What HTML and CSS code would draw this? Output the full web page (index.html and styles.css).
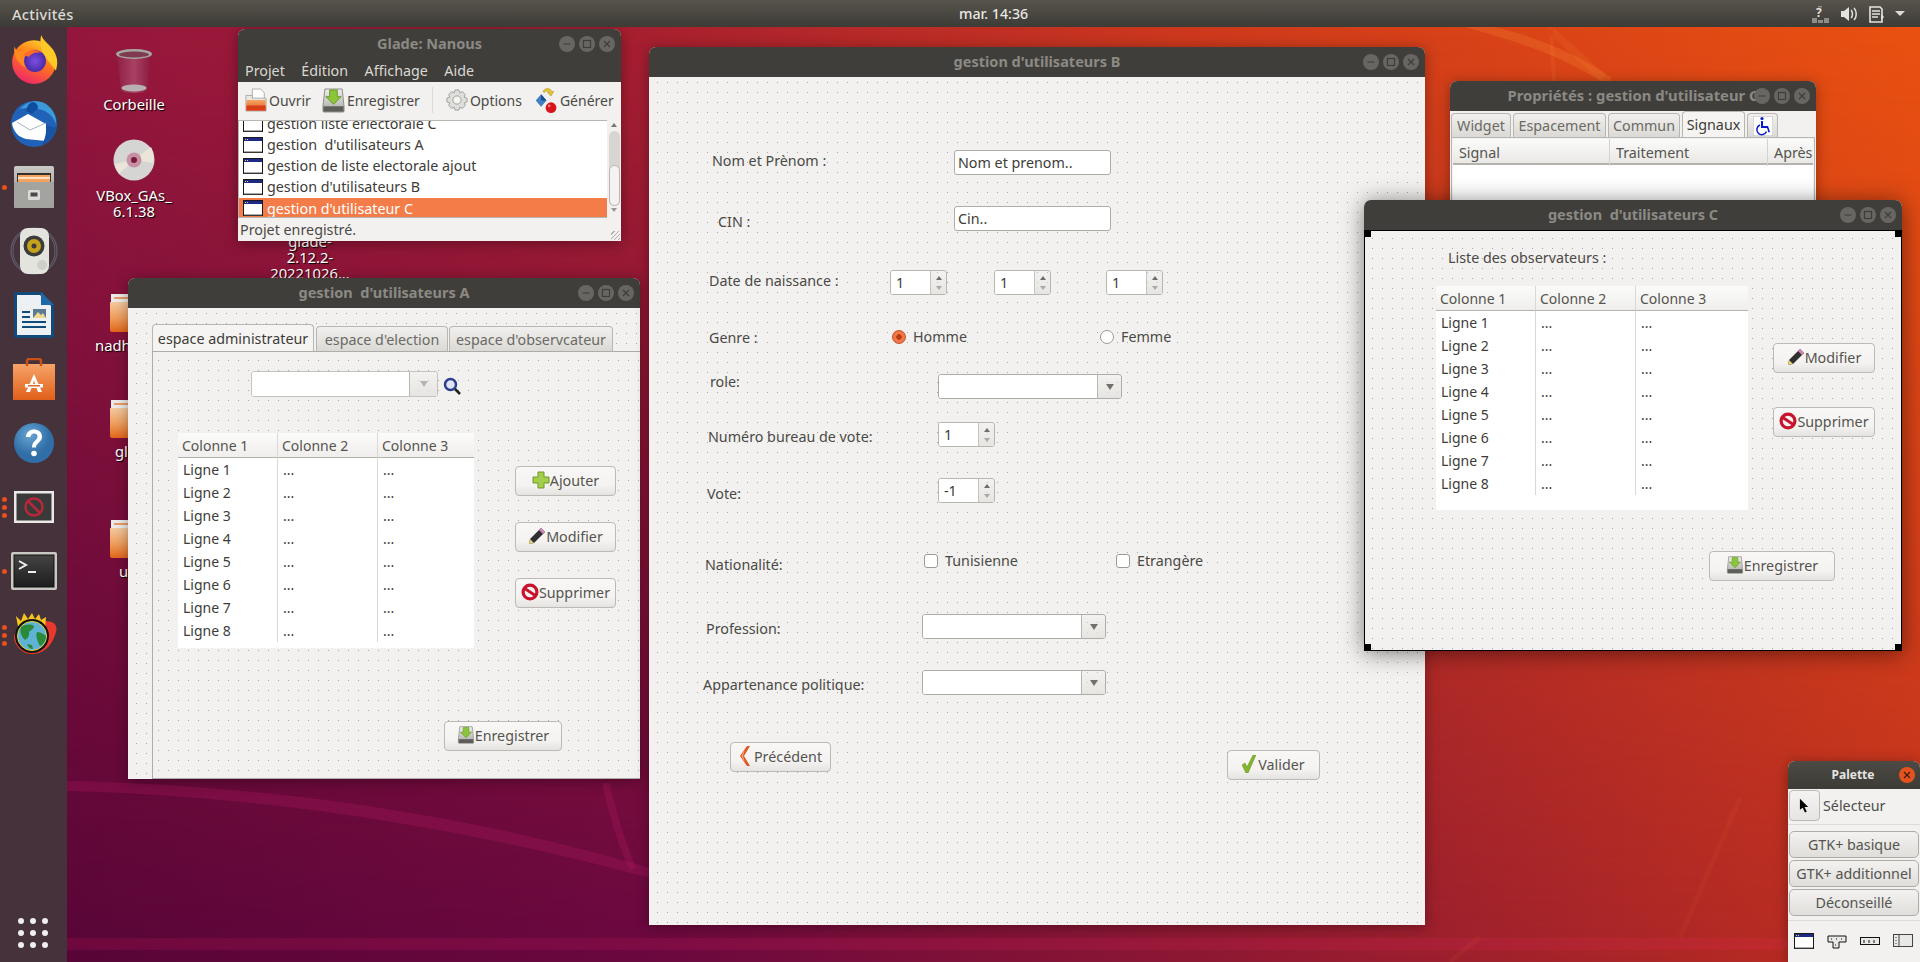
FILE: index.html
```html
<!DOCTYPE html>
<html lang="fr">
<head>
<meta charset="utf-8">
<title>Glade: Nanous</title>
<link rel="stylesheet" href="styles.css">
</head>
<body>
<svg class="defs" aria-hidden="true">
<defs>
<linearGradient id="gFf" x1="0.8" y1="0" x2="0.3" y2="1"><stop offset="0" stop-color="#ffd62e"/><stop offset=".45" stop-color="#ff7a1a"/><stop offset="1" stop-color="#f0246a"/></linearGradient>
<radialGradient id="gFp"><stop offset="0" stop-color="#7c4fe0"/><stop offset="1" stop-color="#4a2aa8"/></radialGradient>
<linearGradient id="gOr" x1="0" y1="0" x2="0" y2="1"><stop offset="0" stop-color="#f6a468"/><stop offset="1" stop-color="#e05f1a"/></linearGradient>
<linearGradient id="gFold" x1="0" y1="0" x2="0" y2="1"><stop offset="0" stop-color="#f4c9a0"/><stop offset=".55" stop-color="#ee9b58"/><stop offset="1" stop-color="#e2661a"/></linearGradient>
<linearGradient id="gGrey" x1="0" y1="0" x2="0" y2="1"><stop offset="0" stop-color="#c9c9c6"/><stop offset="1" stop-color="#8f8f8c"/></linearGradient>
<linearGradient id="gTrash" x1="0" y1="0" x2="1" y2="0"><stop offset="0" stop-color="#8e1f46"/><stop offset=".5" stop-color="#a84163"/><stop offset="1" stop-color="#8a1b40"/></linearGradient>
<radialGradient id="gHelp" cx=".4" cy=".3"><stop offset="0" stop-color="#69a5d4"/><stop offset="1" stop-color="#2f6ea6"/></radialGradient>
<linearGradient id="gTerm" x1="0" y1="0" x2="0" y2="1"><stop offset="0" stop-color="#444"/><stop offset="1" stop-color="#1d1d1d"/></linearGradient>
<linearGradient id="gDrive" x1="0" y1="0" x2="0" y2="1"><stop offset="0" stop-color="#eeeeec"/><stop offset="1" stop-color="#a9a9a6"/></linearGradient>

<symbol id="i-firefox" viewBox="0 0 48 48">
<circle cx="24" cy="27" r="21" fill="url(#gFf)"/>
<path d="M31 1c2 6 8 9 12 15 4 7 4 13 2 19L33 20C31 14 29 8 31 1z" fill="#ffc928"/>
<path d="M5 12c2 5 6 5 10 4 5-3 11-3 15 1-4-1-7 1-8 3-6 2-8 8-4 13-7-2-14-10-13-21z" fill="#ff8a1f"/>
<circle cx="25" cy="26" r="10.5" fill="url(#gFp)"/>
<path d="M14 20c4-5 12-6 17-2-6-1-10 1-12 4z" fill="#ff6a2a"/>
</symbol>
<symbol id="i-tbird" viewBox="0 0 48 48">
<circle cx="24" cy="25" r="23" fill="#1f62b8"/>
<path d="M10 10c6-8 18-10 26-5 6 4 11 12 10 20-3-8-8-12-14-14-5-2-14-3-22-1z" fill="#3c9ad8"/>
<path d="M22 3c4 0 6 3 6 6l-6 6-6-3c1-5 3-8 6-9z" fill="#0f4e9e"/>
<path d="M2 24l16-9 18 10 0 17-20-2C8 38 3 32 2 24z" fill="#fff"/>
<path d="M7 23l13 8 16-7" fill="none" stroke="#a8b4c2" stroke-width="1"/>
<path d="M36 25c5 4 9 4 11 2-2 9-7 16-15 19 3-6 5-13 4-21z" fill="#1853a6"/>
</symbol>
<symbol id="i-files" viewBox="0 0 42 44">
<rect x="1" y="1" width="40" height="42" rx="2" fill="url(#gGrey)"/>
<rect x="4" y="8" width="34" height="12" fill="#33302d"/>
<rect x="5" y="10" width="32" height="8" fill="#f1a35f"/>
<rect x="5" y="12" width="32" height="2" fill="#fbe0c4"/>
<rect x="1" y="17" width="40" height="26" rx="1" fill="#a3a3a0"/>
<rect x="15" y="25" width="12" height="10" rx="1.500" fill="#dcdcda"/>
<rect x="17.500" y="27.500" width="7" height="4" fill="#4a4a48"/>
</symbol>
<symbol id="i-rhythm" viewBox="0 0 48 48">
<circle cx="24" cy="24" r="23" fill="none" stroke="#5c5763" stroke-width="1.500"/>
<path d="M3 24a21 21 0 0 1 8-17M45 24a21 21 0 0 0-8-17M3 24a21 21 0 0 0 8 17M45 24a21 21 0 0 1-8 17" stroke="#62606f" fill="none"/>
<rect x="10" y="1" width="29" height="46" rx="8" fill="#e4e4df"/>
<circle cx="24" cy="19" r="10.500" fill="#3b3b3b"/>
<circle cx="24" cy="19" r="7" fill="#c6a21c"/>
<circle cx="24" cy="19" r="2.500" fill="#3b3b3b"/>
<circle cx="32" cy="38" r="5" fill="#cfcfca"/>
</symbol>
<symbol id="i-writer" viewBox="0 0 40 46">
<path d="M0 0h27l13 13v31a2 2 0 0 1-2 2H2a2 2 0 0 1-2-2z" fill="#114b7c"/>
<path d="M3 3h23l11 11v29H3z" fill="#eef1f4"/>
<path d="M27 0l13 13H27z" fill="#1f6aa6"/>
<path d="M8 19h8v2H8zM8 24h8v2H8zM8 29h24v2H8zM8 34h24v2H8z" fill="#114b7c"/>
<rect x="19" y="17" width="13" height="9" fill="#5a7a96"/>
<path d="M19 26l5-6 3 3 2-2 3 5z" fill="#f0d890"/>
</symbol>
<symbol id="i-store" viewBox="0 0 42 42">
<path d="M0 6h42v36H0z" fill="url(#gOr)"/>
<path d="M14 8V3a2 2 0 0 1 2-2h10a2 2 0 0 1 2 2v5" fill="none" stroke="#c84f16" stroke-width="2.500"/>
<path d="M21 16l-8 18h4l1.500-4h5l1.500 4h4zM20 26l1-4 1 4z" fill="#fff"/>
<rect x="12" y="26" width="18" height="3.500" fill="#fff"/>
<rect x="15" y="27" width="12" height="1.500" fill="#e06a20"/>
</symbol>
<symbol id="i-help" viewBox="0 0 44 44">
<circle cx="22" cy="22" r="20" fill="url(#gHelp)"/>
<path d="M14 16c0-5 4-7.500 8-7.500s8 2.500 8 7c0 6-6 6-6 11h-4c0-7 5.500-7 5.500-11 0-2-1.500-3-3.500-3s-3.500 1.500-3.500 3.500z" fill="#fff"/>
<circle cx="22" cy="32.500" r="2.800" fill="#fff"/>
</symbol>
<symbol id="i-glade" viewBox="0 0 40 32">
<rect x="0" y="0" width="40" height="32" fill="#e9e9e7"/>
<rect x="2.500" y="2.500" width="35" height="27" fill="#3a3a3a"/>
<circle cx="20" cy="16" r="8.500" fill="none" stroke="#b8283a" stroke-width="2.500"/>
<path d="M14 10l12 12" stroke="#b8283a" stroke-width="2.500"/>
</symbol>
<symbol id="i-term" viewBox="0 0 46 38">
<rect x="0" y="0" width="46" height="38" rx="2" fill="#c8c8c5"/>
<rect x="3" y="3" width="40" height="32" fill="url(#gTerm)" stroke="#111"/>
<path d="M8 9l7 4-7 4" fill="none" stroke="#eee" stroke-width="2"/>
<path d="M17 20h8" stroke="#eee" stroke-width="2"/>
</symbol>
<symbol id="i-globe" viewBox="0 0 46 46">
<path d="M4 30C0 22 8 10 34 9c9 0 13 4 11 11-3 10-8 20-22 22-9 1-16-5-19-12z" fill="#e8392e"/>
<path d="M8 20L5 4l5 5 3-8 4 6 4-6 3 6 4-5 2 6 5-3-1 12z" fill="#f7c520"/>
<circle cx="21" cy="24" r="17" fill="#141414"/>
<circle cx="21" cy="24" r="14.500" fill="#5fb4d6" stroke="#e6d53a"/>
<path d="M10 15c4-3 10-3 13-1 0 3-3 4-5 6 1 4-2 7-4 8-3-3-6-8-4-13zM26 20c3 0 7 2 9 4 0 5-3 9-6 10-2-4-5-10-3-14zM16 32l5 1 1 4c-3 0-5-2-6-5z" fill="#2a8a3c"/>
</symbol>
<symbol id="i-trash" viewBox="0 0 40 46">
<path d="M3 6l4 36c0 2 6 3 13 3s13-1 13-3l4-36z" fill="url(#gTrash)"/>
<ellipse cx="20" cy="40" rx="12.500" ry="3.500" fill="#b9b0b2"/>
<ellipse cx="20" cy="6" rx="18" ry="5" fill="#a5a5a2"/>
<ellipse cx="20" cy="6.500" rx="15" ry="3" fill="#7f3a50"/>
</symbol>
<symbol id="i-cd" viewBox="0 0 42 42">
<circle cx="21" cy="21" r="20.500" fill="#d5d5d3"/>
<path d="M21 21L38 8a20 20 0 0 1 2 16zM21 21L6 35a20 20 0 0 1-4-10z" fill="#ebe4d8"/>
<circle cx="21" cy="21" r="7.500" fill="#c790a4"/>
<circle cx="21" cy="21" r="3" fill="#7c1a3e"/>
</symbol>
<symbol id="i-folder" viewBox="0 0 40 38">
<path d="M1 0h36v8H1z" fill="#ecebe8"/>
<path d="M4 3h28v2H4z" fill="#e99a66"/>
<path d="M0 8h40v28a2 2 0 0 1-2 2H2a2 2 0 0 1-2-2z" fill="url(#gFold)"/>
</symbol>

<symbol id="i-win" viewBox="0 0 20 16">
<rect x=".5" y=".5" width="19" height="15" fill="#fff" stroke="#1a1a1a"/>
<rect x="1" y="1" width="18" height="3" fill="#1c2a86"/>
<path d="M2 2h1v1H2zM4 2h1v1H4z" fill="#e8d44c"/>
<path d="M1 15h18" stroke="#555"/>
</symbol>
<symbol id="i-open" viewBox="0 0 24 26">
<path d="M8 1h9l4 4v11H8z" fill="#fff" stroke="#a8a8a4"/>
<path d="M1 8h7v3h15v14H1z" fill="#ece7df" stroke="#a8a8a4"/>
<path d="M1.500 13h21v11.500h-21z" fill="url(#gOr)"/>
<path d="M1.500 19h21v5.500h-21z" fill="#d8401a"/>
</symbol>
<symbol id="i-save" viewBox="0 0 24 26">
<path d="M3 1h18l2 18v5a1 1 0 0 1-1 1H2a1 1 0 0 1-1-1v-5z" fill="url(#gDrive)" stroke="#8a8a86"/>
<rect x="1.500" y="19" width="21" height="5.500" fill="#5d5d5a"/>
<path d="M8 2h8v7h4l-8 8-8-8h4z" fill="#8bc53a" stroke="#5c8f1e" stroke-width=".8"/>
</symbol>
<symbol id="i-gear" viewBox="0 0 24 24">
<path d="M10 1h4l1 3 3-1 3 3-1 3 3 1v4l-3 1 1 3-3 3-3-1-1 3h-4l-1-3-3 1-3-3 1-3-3-1v-4l3-1-1-3 3-3 3 1z" fill="#dededb" stroke="#9a9a96"/>
<circle cx="12" cy="12" r="4.500" fill="#f4f4f2" stroke="#9a9a96"/>
</symbol>
<symbol id="i-gen" viewBox="0 0 24 30">
<path d="M6 8l6 7-6 7-6-7z" fill="#3f7fc4"/>
<path d="M6 8l6 7H6z" fill="#1d4b8c"/>
<path d="M8 5c2-4 8-5 10 0l2 0-3 5-4-4 2 0c-1-2-4-2-5 0z" fill="#e8c22c" stroke="#a48412" stroke-width=".5"/>
<circle cx="17" cy="23" r="6" fill="#d8141c"/>
<circle cx="15" cy="21" r="1.500" fill="#f57a7a"/>
</symbol>
<symbol id="i-plus" viewBox="0 0 18 18">
<path d="M6 1h6v5h5v6h-5v5H6v-5H1V6h5z" fill="#a4cf4d" stroke="#6c9a26"/>
</symbol>
<symbol id="i-pencil" viewBox="0 0 18 18">
<path d="M13 1l4 4L6 16l-5 1 1-5z" fill="#2f2f2f"/>
<path d="M13 1l4 4-2 2-4-4z" fill="#cf86b4"/>
<path d="M2 12l4 4-5 1z" fill="#e3d27a"/>
</symbol>
<symbol id="i-stop" viewBox="0 0 18 18">
<circle cx="9" cy="9" r="8.500" fill="#c8142c"/>
<circle cx="9" cy="9" r="5.300" fill="#f4f4f4"/>
<path d="M3 5l12 8" stroke="#c8142c" stroke-width="3"/>
</symbol>
<symbol id="i-search" viewBox="0 0 18 18">
<circle cx="7.500" cy="7.500" r="5.500" fill="#dfe6f2" stroke="#2b3f92" stroke-width="2.500"/>
<path d="M12 12l5 5" stroke="#222" stroke-width="2.500"/>
</symbol>
<symbol id="i-check" viewBox="0 0 14 18">
<path d="M0 10l3-2 2 4 6-12h3L6 18H4z" fill="#85b52e" stroke="#648a1c" stroke-width=".5"/>
</symbol>
<symbol id="i-back" viewBox="0 0 12 20">
<path d="M8 0h3L5 10l6 10H8L1 10z" fill="#e0561e"/>
<path d="M6 3L2.500 10 6 17 4 10z" fill="#f6b08a"/>
</symbol>
<symbol id="i-wheel" viewBox="0 0 20 20">
<rect width="20" height="20" fill="#fff" stroke="#b9b7b2"/>
<circle cx="9" cy="2.500" r="1.600" fill="#0a18d0"/>
<path d="M8 5h2v5h5l2 6-1.500.5-1.500-4.500H8z" fill="#0a18d0"/>
<path d="M7 9a5 5 0 1 0 6.500 6.500" fill="none" stroke="#0a18d0" stroke-width="1.500"/>
</symbol>
<symbol id="i-cursor" viewBox="0 0 12 16">
<path d="M1 0v12l3-2 2.500 5 2-1L6 9h4z" fill="#000"/>
</symbol>
<symbol id="i-p2" viewBox="0 0 20 16">
<path d="M1 3h18v6h-7v6H6V9H1z" fill="#e8e8e6" stroke="#111"/>
<path d="M4 6h1M9 6h1M14 6h1M8 12h1" stroke="#111"/>
</symbol>
<symbol id="i-p3" viewBox="0 0 20 16">
<rect x=".5" y="4.500" width="19" height="7" fill="#e8e8e6" stroke="#111"/>
<path d="M4 7v3M9 7v3M14 7v3" stroke="#111"/>
</symbol>
<symbol id="i-p4" viewBox="0 0 20 16">
<rect x=".5" y="1.500" width="19" height="12" fill="#e8e8e6" stroke="#444"/>
<path d="M3 4v1M3 7v1M3 10v1M6 2v11" stroke="#444"/>
</symbol>
<symbol id="i-min" viewBox="0 0 16 16"><path d="M4.500 8h7" stroke="currentColor" stroke-width="1.200"/></symbol>
<symbol id="i-max" viewBox="0 0 16 16"><rect x="4.500" y="4.500" width="7" height="7" fill="none" stroke="currentColor" stroke-width="1.200"/></symbol>
<symbol id="i-close" viewBox="0 0 16 16"><path d="M5 5l6 6M11 5l-6 6" stroke="currentColor" stroke-width="1.200"/></symbol>
<symbol id="i-net" viewBox="0 0 18 18">
<path d="M7 1h4v1.500H7zM1 13h5v5H1zM7 15h5v3H7zM13 13h5v5h-5z" fill="#8e8d88"/>
</symbol>
<symbol id="i-vol" viewBox="0 0 18 18">
<path d="M1 6h3l5-4v14l-5-4H1z" fill="#e4e3df"/>
<path d="M11 5c2 2 2 6 0 8M14 3c3 3 3 9 0 12" fill="none" stroke="#e4e3df" stroke-width="1.500"/>
</symbol>
<symbol id="i-clip" viewBox="0 0 16 18">
<path d="M1 2h10l2 2v13H1z" fill="none" stroke="#e4e3df" stroke-width="1.600"/>
<path d="M3 6h8M3 9h8M3 12h6" stroke="#e4e3df" stroke-width="1.400"/>
<path d="M12 9v6l3-3z" fill="#e4e3df"/>
</symbol>
</defs>
</svg>

<svg class="wall" viewBox="0 0 1920 962" preserveAspectRatio="none" aria-hidden="true">
<path d="M0 938H1920V950H0z" fill="#ff2a6a" fill-opacity=".13"/>
<path d="M0 790C260 790 470 830 650 878L650 868C470 815 260 780 0 780z" fill="#c61f6c" fill-opacity=".22"/>
<path d="M602 783C610 820 620 850 630 870L636 868C625 840 615 810 610 783z" fill="#c61f6c" fill-opacity=".22"/>
<path d="M1465 27C1530 45 1570 60 1606 85L1612 78C1580 55 1540 38 1495 27z" fill="#ff9a3c" fill-opacity=".2"/>
<path d="M1549 27L1552 81H1556L1553 27zM1553 27L1606 75L1600 80L1548 33z" fill="#ff9a3c" fill-opacity=".1"/>
<path d="M1680 938l60-140M1450 962l30-25" stroke="#ff8a4c" stroke-opacity=".06" stroke-width="5"/>
</svg>

<header class="topbar">
<span class="activities">Activités</span>
<span class="clock">mar. 14:36</span>
<div class="status">
<span class="st-netwrap"><svg class="st"><use href="#i-net"/></svg><span class="st-q">?</span></span>
<svg class="st st-vol"><use href="#i-vol"/></svg>
<svg class="st st-clip"><use href="#i-clip"/></svg>
<span class="st-caret"></span>
</div>
</header>

<nav class="dock">
<div class="dock-item"><svg class="di di-firefox"><use href="#i-firefox"/></svg></div>
<div class="dock-item"><svg class="di di-tbird"><use href="#i-tbird"/></svg></div>
<div class="dock-item"><span class="run run-1"></span><svg class="di di-files"><use href="#i-files"/></svg></div>
<div class="dock-item"><svg class="di di-rhythm"><use href="#i-rhythm"/></svg></div>
<div class="dock-item"><svg class="di di-writer"><use href="#i-writer"/></svg></div>
<div class="dock-item"><svg class="di di-store"><use href="#i-store"/></svg></div>
<div class="dock-item"><svg class="di di-help"><use href="#i-help"/></svg></div>
<div class="dock-item"><span class="run run-3"></span><svg class="di di-glade"><use href="#i-glade"/></svg></div>
<div class="dock-item"><span class="run run-1"></span><svg class="di di-term"><use href="#i-term"/></svg></div>
<div class="dock-item"><span class="run run-3"></span><svg class="di di-globe"><use href="#i-globe"/></svg></div>
<div class="apps"><i></i><i></i><i></i><i></i><i></i><i></i><i></i><i></i><i></i></div>
</nav>

<div class="dicon dicon-trash"><svg class="dimg-trash"><use href="#i-trash"/></svg><span>Corbeille</span></div>
<div class="dicon dicon-cd"><svg class="dimg-cd"><use href="#i-cd"/></svg><span>VBox_GAs_<br>6.1.38</span></div>
<div class="dicon dicon-glade"><span>glade-<br>2.12.2-<br>20221026...</span></div>
<div class="dfolder dfolder-1"><svg class="dimg-folder"><use href="#i-folder"/></svg><span class="fl-1">nadh</span></div>
<div class="dfolder dfolder-2"><svg class="dimg-folder"><use href="#i-folder"/></svg><span class="fl-2">gl</span></div>
<div class="dfolder dfolder-3"><svg class="dimg-folder"><use href="#i-folder"/></svg><span class="fl-3">u</span></div>

<!-- Glade main window -->
<section class="win win-glade">
<div class="tbar tbar-glade"><span class="wt">Glade: Nanous</span>
<div class="wbtns"><svg class="wb"><use href="#i-min"/></svg><svg class="wb"><use href="#i-max"/></svg><svg class="wb"><use href="#i-close"/></svg></div></div>
<div class="menubar"><span>Projet</span><span>Édition</span><span>Affichage</span><span>Aide</span></div>
<div class="toolbar">
<span class="tool t-open"><svg class="ti"><use href="#i-open"/></svg>Ouvrir</span>
<span class="tool t-save"><svg class="ti ti-save"><use href="#i-save"/></svg>Enregistrer</span>
<span class="tsep"></span>
<span class="tool t-opt"><svg class="ti"><use href="#i-gear"/></svg>Options</span>
<span class="tool t-gen"><svg class="ti ti-gen"><use href="#i-gen"/></svg>Générer</span>
</div>
<div class="listwrap">
<ul class="flist">
<li><svg class="li-i"><use href="#i-win"/></svg>gestion liste erlectorale C</li>
<li><svg class="li-i"><use href="#i-win"/></svg>gestion&nbsp; d'utilisateurs A</li>
<li><svg class="li-i"><use href="#i-win"/></svg>gestion de liste electorale ajout</li>
<li><svg class="li-i"><use href="#i-win"/></svg>gestion d'utilisateurs B</li>
<li class="sel"><svg class="li-i"><use href="#i-win"/></svg>gestion d'utilisateur C</li>
</ul>
<div class="vscroll"><span class="up"></span><span class="trough"><span class="thumb"></span></span><span class="down"></span></div>
</div>
<div class="statusbar">Projet enregistré.<span class="grip"></span></div>
</section>

<!-- Window A -->
<section class="win win-a">
<div class="tbar"><span class="wt">gestion&nbsp; d'utilisateurs A</span>
<div class="wbtns"><svg class="wb"><use href="#i-min"/></svg><svg class="wb"><use href="#i-max"/></svg><svg class="wb"><use href="#i-close"/></svg></div></div>
<div class="dotted a-body">
<div class="tabs a-tabs">
<span class="tab on a-t1">espace administrateur</span>
<span class="tab a-t2">espace d'election</span>
<span class="tab a-t3">espace d'observcateur</span>
</div>
<div class="a-panel dotted">
<div class="a-search">
<div class="combo combo-off a-combo"><span class="cb-entry"></span><span class="cb-btn"><i></i></span></div>
<svg class="search-i"><use href="#i-search"/></svg>
</div>
<div class="a-mid">
<div class="tree tree-a">
<div class="th">Colonne 1</div><div class="th">Colonne 2</div><div class="th">Colonne 3</div>
<div class="td">Ligne 1</div><div class="td">...</div><div class="td">...</div>
<div class="td">Ligne 2</div><div class="td">...</div><div class="td">...</div>
<div class="td">Ligne 3</div><div class="td">...</div><div class="td">...</div>
<div class="td">Ligne 4</div><div class="td">...</div><div class="td">...</div>
<div class="td">Ligne 5</div><div class="td">...</div><div class="td">...</div>
<div class="td">Ligne 6</div><div class="td">...</div><div class="td">...</div>
<div class="td">Ligne 7</div><div class="td">...</div><div class="td">...</div>
<div class="td">Ligne 8</div><div class="td">...</div><div class="td">...</div>
</div>
<div class="a-btns">
<span class="btn"><svg class="bi"><use href="#i-plus"/></svg>Ajouter</span>
<span class="btn"><svg class="bi"><use href="#i-pencil"/></svg>Modifier</span>
<span class="btn"><svg class="bi"><use href="#i-stop"/></svg>Supprimer</span>
</div>
</div>
<span class="btn a-save"><svg class="bi"><use href="#i-save"/></svg>Enregistrer</span>
</div>
</div>
</section>

<!-- Window B -->
<section class="win win-b">
<div class="tbar"><span class="wt">gestion d'utilisateurs B</span>
<div class="wbtns"><svg class="wb"><use href="#i-min"/></svg><svg class="wb"><use href="#i-max"/></svg><svg class="wb"><use href="#i-close"/></svg></div></div>
<div class="dotted b-body">
<div class="row r-nom"><label class="lab">Nom et Prènom :</label><span class="entry">Nom et prenom..</span></div>
<div class="row r-cin"><label class="lab">CIN :</label><span class="entry">Cin..</span></div>
<div class="row r-date"><label class="lab">Date de naissance :</label>
<span class="spin sp1"><b>1</b><span class="arrows"><i></i><i></i></span></span>
<span class="spin sp2"><b>1</b><span class="arrows"><i></i><i></i></span></span>
<span class="spin sp3"><b>1</b><span class="arrows"><i></i><i></i></span></span></div>
<div class="row r-genre"><label class="lab">Genre :</label>
<span class="opt opt-r"><i class="radio on"></i>Homme</span><span class="opt"><i class="radio"></i>Femme</span></div>
<div class="row r-role"><label class="lab">role:</label><div class="combo c-role"><span class="cb-entry"></span><span class="cb-btn"><i></i></span></div></div>
<div class="row r-num"><label class="lab">Numéro bureau de vote:</label><span class="spin"><b>1</b><span class="arrows"><i></i><i></i></span></span></div>
<div class="row r-vote"><label class="lab">Vote:</label><span class="spin"><b>-1</b><span class="arrows"><i></i><i></i></span></span></div>
<div class="row r-nat"><label class="lab">Nationalité:</label>
<span class="opt opt-c"><i class="check"></i>Tunisienne</span><span class="opt"><i class="check"></i>Etrangère</span></div>
<div class="row r-prof"><label class="lab">Profession:</label><div class="combo c-prof"><span class="cb-entry"></span><span class="cb-btn"><i></i></span></div></div>
<div class="row r-app"><label class="lab">Appartenance politique:</label><div class="combo c-prof"><span class="cb-entry"></span><span class="cb-btn"><i></i></span></div></div>
<div class="b-actions"><span class="btn b-prev"><svg class="bi bi-back"><use href="#i-back"/></svg>Précédent</span><span class="btn b-ok"><svg class="bi bi-check"><use href="#i-check"/></svg>Valider</span></div>
</div>
</section>

<!-- Properties window -->
<section class="win win-p">
<div class="tbar"><span class="wt wt-p">Propriétés : gestion d'utilisateur C</span>
<div class="wbtns"><svg class="wb"><use href="#i-min"/></svg><svg class="wb"><use href="#i-max"/></svg><svg class="wb"><use href="#i-close"/></svg></div></div>
<div class="tabs p-tabs">
<span class="tab p-t1">Widget</span><span class="tab p-t2">Espacement</span><span class="tab p-t3">Commun</span><span class="tab on p-t4">Signaux</span><span class="tab p-t5"><svg class="wheel"><use href="#i-wheel"/></svg></span>
</div>
<div class="p-panel">
<div class="p-head"><span class="ph1">Signal</span><span class="ph2">Traitement</span><span class="ph3">Après</span></div>
<div class="p-white"></div>
</div>
</section>

<!-- Window C -->
<section class="win win-c">
<div class="tbar"><span class="wt">gestion&nbsp; d'utilisateurs C</span>
<div class="wbtns"><svg class="wb"><use href="#i-min"/></svg><svg class="wb"><use href="#i-max"/></svg><svg class="wb"><use href="#i-close"/></svg></div></div>
<div class="dotted c-body">
<span class="hd hd-1"></span><span class="hd hd-2"></span><span class="hd hd-3"></span><span class="hd hd-4"></span>
<label class="c-title">Liste des observateurs :</label>
<div class="c-mid">
<div class="tree tree-c">
<div class="th">Colonne 1</div><div class="th">Colonne 2</div><div class="th">Colonne 3</div>
<div class="td">Ligne 1</div><div class="td">...</div><div class="td">...</div>
<div class="td">Ligne 2</div><div class="td">...</div><div class="td">...</div>
<div class="td">Ligne 3</div><div class="td">...</div><div class="td">...</div>
<div class="td">Ligne 4</div><div class="td">...</div><div class="td">...</div>
<div class="td">Ligne 5</div><div class="td">...</div><div class="td">...</div>
<div class="td">Ligne 6</div><div class="td">...</div><div class="td">...</div>
<div class="td">Ligne 7</div><div class="td">...</div><div class="td">...</div>
<div class="td">Ligne 8</div><div class="td">...</div><div class="td">...</div>
</div>
<div class="c-btns">
<span class="btn"><svg class="bi"><use href="#i-pencil"/></svg>Modifier</span>
<span class="btn"><svg class="bi"><use href="#i-stop"/></svg>Supprimer</span>
</div>
</div>
<span class="btn c-save"><svg class="bi"><use href="#i-save"/></svg>Enregistrer</span>
</div>
</section>

<!-- Palette -->
<section class="win win-pal">
<div class="tbar tbar-pal"><span class="wt-pal">Palette</span><svg class="pal-x"><use href="#i-close"/></svg></div>
<div class="pal-sel"><span class="pal-cur"><svg class="cur-i"><use href="#i-cursor"/></svg></span><span>Sélecteur</span></div>
<div class="pal-groups">
<span class="pal-g">GTK+ basique</span>
<span class="pal-g">GTK+ additionnel</span>
<span class="pal-g">Déconseillé</span>
</div>
<div class="pal-icons"><svg class="pi"><use href="#i-win"/></svg><svg class="pi"><use href="#i-p2"/></svg><svg class="pi"><use href="#i-p3"/></svg><svg class="pi"><use href="#i-p4"/></svg></div>
</section>
</body>
</html>
```

FILE: styles.css
```css
* { box-sizing: border-box; }
html, body { margin: 0; padding: 0; }
body {
  position: relative;
  width: 1920px;
  height: 962px;
  overflow: hidden;
  font-family: "Noto Sans", "Open Sans", sans-serif;
  font-size: 14.3px;
  color: #3d3c38;
  background: linear-gradient(to right, #560537 0, #6a0840 33%, #9c1f2e 75%, #c0301f 100%);
}
body::before {
  content: "";
  position: absolute;
  inset: 0;
  background: linear-gradient(to right, #95163f 0, #a8202f 33%, #cf3a1c 62%, #ea5210 100%);
  -webkit-mask-image: linear-gradient(to bottom, #000 0, rgba(0,0,0,.55) 45%, transparent 100%);
  mask-image: linear-gradient(to bottom, #000 0, rgba(0,0,0,.55) 45%, transparent 100%);
}
.defs { position: absolute; width: 0; height: 0; }
svg { display: block; flex: none; }
.wall { position: absolute; left: 0; top: 0; width: 1920px; height: 962px; }

/* top bar */
.topbar {
  position: absolute; left: 0; top: 0; width: 1920px; height: 27px; z-index: 50;
  background: linear-gradient(#58544c, #3c3b36);
  color: #e6e5e1; display: flex; align-items: center; padding-left: 12px;
}
.activities { font-size: 14.6px; font-weight: 500; letter-spacing: .3px; color: #dcdbd6; }
.clock { position: absolute; left: 959px; font-weight: 500; font-size: 14.2px; color: #e8e7e3; }
.status { margin-left: auto; display: flex; align-items: center; }
.st { width: 18px; height: 18px; }
.st-netwrap { position: relative; width: 18px; height: 18px; margin-right: 11px; }
.st-q { position: absolute; left: 5px; top: -2px; font-size: 12px; font-weight: 700; line-height: 20px; color: #e4e3df; }
.st-vol { margin-right: 11px; }
.st-clip { width: 16px; margin-right: 10px; }
.st-caret { width: 0; height: 0; border: 5px solid transparent; border-top: 5px solid #dcdbd6; border-bottom: 0; margin-right: 15px; }

/* dock */
.dock {
  position: absolute; left: 0; top: 27px; width: 67px; height: 935px; z-index: 40;
  background: #45323b; display: flex; flex-direction: column;
}
.dock-item { position: relative; height: 64px; display: flex; align-items: center; justify-content: center; }
.di-firefox { width: 50px; height: 50px; }
.di-tbird { width: 48px; height: 48px; }
.di-files { width: 42px; height: 44px; }
.di-rhythm { width: 48px; height: 48px; }
.di-writer { width: 40px; height: 46px; }
.di-store { width: 42px; height: 42px; }
.di-help { width: 44px; height: 44px; }
.di-glade { width: 40px; height: 32px; }
.di-term { width: 46px; height: 38px; }
.di-globe { width: 46px; height: 46px; }
.run { position: absolute; left: 2px; top: 50%; width: 5px; height: 5px; margin-top: -2px; border-radius: 50%; background: #e8501e; }
.run-3 { box-shadow: 0 -8px 0 #e8501e, 0 8px 0 #e8501e; }
.apps { margin-top: auto; margin-bottom: 14px; padding-left: 18px; display: grid; grid-template-columns: repeat(3, 6px); gap: 6px; }
.apps i { width: 6px; height: 6px; border-radius: 50%; background: #f0eeee; }

/* desktop icons */
.dicon, .dfolder { position: absolute; color: #fff; text-shadow: 1px 1px 1px #000; font-size: 14.8px; line-height: 16px; text-align: center; }
.dicon { display: flex; flex-direction: column; align-items: center; }
.dicon-trash { left: 84px; top: 48px; width: 100px; }
.dimg-trash { width: 40px; height: 46px; margin-bottom: 2px; }
.dicon-cd { left: 84px; top: 139px; width: 100px; }
.dimg-cd { width: 42px; height: 42px; margin-bottom: 6px; }
.dicon-glade { left: 250px; top: 233px; width: 120px; }
.dfolder { left: 110px; width: 40px; }
.dimg-folder { width: 40px; height: 38px; }
.dfolder-1 { top: 294px; }
.dfolder-2 { top: 400px; }
.dfolder-3 { top: 520px; }
.dfolder span { display: block; text-align: left; margin-top: 5px; }
.fl-1 { margin-left: -15px; }
.fl-2 { margin-left: 5px; }
.fl-3 { margin-left: 9px; }

/* windows */
.win { position: absolute; border-radius: 7px 7px 0 0; box-shadow: 0 2px 14px rgba(0,0,0,.35); background: #f2f1ef; }
.win-glade { left: 238px; top: 29px; width: 383px; height: 212px; z-index: 5; }
.win-a { left: 128px; top: 278px; width: 512px; height: 501px; z-index: 6; }
.win-b { left: 649px; top: 47px; width: 776px; height: 878px; z-index: 7; }
.win-p { left: 1450px; top: 81px; width: 366px; height: 140px; z-index: 8; }
.win-c { left: 1364px; top: 200px; width: 538px; height: 451px; z-index: 9; }
.win-pal { left: 1788px; top: 761px; width: 132px; height: 201px; z-index: 10; }

.tbar {
  position: relative; height: 30px; padding-bottom: 2px; background: #403e3a; border-radius: 7px 7px 0 0;
  display: flex; align-items: center; justify-content: center;
}
.tbar-glade { height: 31px; padding-bottom: 4px; }
.wt { font-size: 14.5px; font-weight: 700; color: #8b8a85; white-space: pre; }
.wt-p { font-size: 14.8px; }
.wbtns { position: absolute; right: 6px; top: 7px; display: flex; gap: 4px; }
.wb { width: 16px; height: 16px; border-radius: 50%; background: #686662; color: #3f3d39; }

.dotted {
  background-color: #f2f1ef;
  background-image: conic-gradient(from 270deg at 1px 1px, #a8a7a3 25%, transparent 0);
  background-size: 10px 10px;
  background-position: 8px 5px;
}

/* glade */
.menubar { height: 22px; padding-bottom: 2px; background: #403e3a; color: #d9d8d3; display: flex; align-items: center; padding-left: 7px; gap: 16.5px; }
.toolbar { height: 38px; padding-bottom: 2px; background: #f2f1ef; display: flex; align-items: center; padding-left: 7px; color: #4b4a46; font-size: 14px; }
.tool { display: flex; align-items: center; gap: 2px; }
.ti { width: 22px; height: 24px; }
.ti-save { width: 23px; height: 25px; }
.ti-gen { width: 23px; height: 27px; }
.t-save { margin-left: 11px; }
.tsep { width: 1px; height: 26px; background: #dbdad6; margin: 0 13px 0 12px; }
.t-gen { margin-left: 13px; }
.listwrap { height: 98px; display: flex; background: #f2f1ef; overflow: hidden; }
.flist { list-style: none; margin: 0; padding: 0; width: 369px; height: 98px; overflow: hidden; background: #fff; border: 1px solid #b8b6b0; border-width: 1px 0 1px 1px; }
.flist li { height: 21px; display: flex; align-items: center; padding-left: 4px; gap: 4px; color: #3d3c38; margin-top: 0; white-space: pre; }
.flist li:first-child { margin-top: -8px; }
.flist .sel { background: #f37c48; color: #fff; margin-top: 1px; padding-bottom: 1px; }
.li-i { width: 20px; height: 16px; }
.vscroll { width: 14px; display: flex; flex-direction: column; align-items: center; padding-top: 3px; }
.up, .down { width: 0; height: 0; border: 3px solid transparent; }
.up { border-bottom: 4px solid #77766f; border-top: 0; }
.down { border-top: 4px solid #9a9993; border-bottom: 0; margin-top: 2px; }
.trough { width: 11px; height: 75px; margin-top: 4px; background: #d6d5d1; border-radius: 6px; display: flex; flex-direction: column; justify-content: flex-end; }
.thumb { display: block; height: 41px; border-radius: 6px; background: #f4f3f1; border: 1px solid #b8b6b0; }
.statusbar { position: relative; height: 23px; padding: 0 0 0 2px; line-height: 23px; color: #4b4a46; background: #f2f1ef; }
.grip { position: absolute; right: 1px; bottom: 1px; width: 9px; height: 9px; background: repeating-linear-gradient(135deg, transparent 0 2px, #b0aea8 2px 3px); }

/* tabs */
.tabs { display: flex; align-items: flex-end; }
.tab {
  display: flex; align-items: center; justify-content: center; height: 25px;
  border: 1px solid #b8b6b0; border-bottom: 0; border-radius: 4px 4px 0 0;
  background: linear-gradient(#f1f0ee, #dad9d5); color: #6b6a65; white-space: nowrap;
}
.tab.on { background: #f5f4f3; color: #3d3c38; }
.a-body { height: 471px; padding: 16px 0 0 24px; }
.a-tabs { height: 27px; }
.a-t1 { width: 162px; height: 27px; }
.a-t2 { width: 132px; margin-left: 2px; }
.a-t3 { width: 164px; margin-left: 1px; }
.a-panel { height: 428px; width: 488px; border: 1px solid #aeaca6; border-width: 1px 0 1px 1px; padding: 19px 0 0 98px; background-position: 5px 8px; }
.a-search { display: flex; align-items: center; height: 26px; }
.search-i { width: 18px; height: 18px; margin-left: 5px; margin-top: 4px; }
.a-mid { display: flex; margin: 36px 0 0 -73px; }
.a-btns { margin-left: 41px; padding-top: 33px; display: flex; flex-direction: column; gap: 26px; width: 101px; }
.a-save { width: 118px; margin: 73px 0 0 193px; }

/* common widgets */
.combo { display: flex; height: 25px; border: 1px solid #aeaca6; border-radius: 3px; }
.cb-entry { flex: 1; background: #fff; border-right: 1px solid #b8b6b0; border-radius: 2px 0 0 2px; }
.cb-btn { width: 23px; display: flex; align-items: center; justify-content: center; background: linear-gradient(rgba(246,245,244,.2), rgba(228,227,224,.85)); }
.cb-btn i { width: 0; height: 0; border: 4px solid transparent; border-top: 6px solid #72716b; border-bottom: 0; }
.combo-off { width: 187px; height: 26px; border-color: #c5c3be; }
.combo-off .cb-btn { width: 27px; }
.combo-off .cb-btn i { border-top-color: #b5b4ae; }
.c-role { width: 184px; }
.c-prof { width: 184px; }

.btn {
  display: flex; align-items: center; justify-content: center; height: 30px; gap: 0; padding-bottom: 2px;
  border: 1px solid #bcbab4; border-radius: 4px; color: #55544f; white-space: nowrap;
  background: linear-gradient(#f8f7f6 0, #f4f3f2 65%, #e4e3e0 100%);
}
.bi { width: 18px; height: 18px; }
.bi-back { width: 12px; height: 20px; margin-right: 3px; }
.bi-check { width: 14px; height: 18px; margin-right: 2px; }

.tree { display: grid; background: #fff; align-content: start; font-size: 14px; }
.th { height: 25px; line-height: 25px; padding-left: 4px; color: #55544f; background: linear-gradient(#fbfbfa, #efeeec); border-bottom: 1px solid #b4b2ac; border-right: 1px solid #d9d8d5; }
.th:nth-child(3n) { border-right: 0; }
.td { height: 23px; line-height: 23px; padding-left: 5px; border-right: 1px solid #d9d8d5; color: #3d3c38; }
.td:nth-child(3n) { border-right: 0; }
.tree-a { width: 296px; height: 215px; grid-template-columns: 100px 100px 96px; }
.tree-c { width: 312px; height: 224px; grid-template-columns: 100px 100px 112px; }
.tree-c .th { line-height: 26px; }

/* form B */
.b-body { height: 848px; padding-top: 73px; background-position: 8px 5px; }
.row { --lx: 60px; --cx: 241px; --ly: 0px; display: flex; align-items: center; height: 25px; }
.lab { margin-left: var(--lx); width: calc(var(--cx) - var(--lx)); flex: none; transform: translateY(var(--ly)); color: #4a4945; white-space: nowrap; }
.r-nom { --lx: 63px; --cx: 305px; --ly: -2px; }
.r-cin { --lx: 69px; --cx: 305px; --ly: 3px; margin-top: 31px; }
.r-date { --lx: 60px; --cx: 241px; --ly: -2px; margin-top: 39px; }
.r-genre { --lx: 60px; --cx: 243px; --ly: 0px; margin-top: 30px; }
.r-role { --lx: 61px; --cx: 289px; --ly: -5px; margin-top: 24px; }
.r-num { --lx: 59px; --cx: 289px; --ly: 2px; margin-top: 23px; }
.r-vote { --lx: 58px; --cx: 289px; --ly: 3px; margin-top: 31px; }
.r-nat { --lx: 56px; --cx: 275px; --ly: 3px; margin-top: 46px; }
.r-prof { --lx: 57px; --cx: 273px; --ly: 2px; margin-top: 40px; }
.r-app { --lx: 54px; --cx: 273px; --ly: 2px; margin-top: 31px; }
.entry { width: 157px; height: 25px; padding-left: 3px; line-height: 24px; background: #fff; border: 1px solid #aeaca6; border-radius: 3px; color: #3d3c38; }
.spin { display: flex; width: 57px; height: 25px; border: 1px solid #b8b6b0; border-radius: 3px; flex: none; }
.spin b { width: 40px; font-weight: 400; padding-left: 5px; line-height: 23px; background: #fff; border-right: 1px solid #c5c3be; border-radius: 2px 0 0 2px; color: #3d3c38; }
.arrows { flex: 1; display: flex; flex-direction: column; align-items: center; justify-content: center; gap: 6px; background: linear-gradient(rgba(246,245,244,.2), rgba(228,227,224,.85)); }
.arrows i { width: 0; height: 0; border: 3px solid transparent; border-bottom: 4px solid #6e6d67; border-top: 0; }
.arrows i + i { border-bottom: 0; border-top: 4px solid #aaa9a3; }
.sp2 { margin-left: 47px; }
.sp3 { margin-left: 55px; }
.opt { display: flex; align-items: center; gap: 7px; color: #4a4945; transform: translateY(-1px); }
.opt-r { width: 208px; }
.opt-c { width: 192px; }
.radio { width: 14px; height: 14px; border-radius: 50%; border: 1px solid #9c9a94; background: #fff; }
.radio.on { border-color: #c64e1f; background: radial-gradient(circle, #b73c10 0 2.500px, #f0774a 3px); }
.check { width: 14px; height: 14px; border-radius: 3px; border: 1px solid #9c9a94; background: #fff; }
.b-actions { display: flex; align-items: flex-start; height: 38px; margin-top: 47px; padding-left: 81px; }
.b-prev { width: 101px; }
.b-ok { width: 93px; margin: 8px 0 0 396px; }

/* properties */
.p-tabs { height: 26px; padding-left: 1px; background: #f2f1ef; }
.p-t1 { width: 60px; height: 24px; }
.p-t2 { width: 93px; height: 24px; margin-left: 2px; }
.p-t3 { width: 72px; height: 24px; margin-left: 2px; }
.p-t4 { width: 63px; height: 26px; margin-left: 2px; }
.p-t5 { width: 31px; height: 24px; margin-left: 2px; }
.wheel { width: 20px; height: 20px; }
.p-panel { border: 1px solid #b8b6b0; border-bottom: 0; margin: 0 1px; padding: 1px 1px 0; height: 83px; background: #f2f1ef; }
.p-head { height: 26px; display: grid; grid-template-columns: 157px 158px 1fr; background: linear-gradient(#fbfbfa, #e9e8e5); border-bottom: 2px solid #b4b2ac; color: #55544f; line-height: 27px; }
.p-head span { padding-left: 6px; border-right: 1px solid #d4d3cf; }
.p-head span:last-child { border-right: 0; }
.p-white { height: 50px; background: #fff; }

/* window C */
.win-c { box-shadow: 0 2px 22px rgba(0,0,0,.5); }
.c-body { position: relative; height: 421px; border: 1px solid #000; border-top-width: 1px; padding: 18px 0 0 83px; background-position: 7px 7px; }
.c-title { display: block; line-height: 18px; color: #4a4945; margin-left: 0; }
.hd { position: absolute; width: 7px; height: 7px; background: #000; }
.hd-1 { left: -1px; top: -1px; }
.hd-2 { right: -1px; top: -1px; }
.hd-3 { left: -1px; bottom: -1px; }
.hd-4 { right: -1px; bottom: -1px; }
.c-mid { display: flex; margin: 19px 0 0 -12px; }
.c-btns { margin-left: 25px; padding-top: 57px; display: flex; flex-direction: column; gap: 34px; width: 102px; }
.c-save { width: 126px; margin: 41px 0 0 261px; }

/* palette */
.tbar-pal { height: 28px; background: linear-gradient(#4d4a44, #3c3b36); }
.wt-pal { font-size: 12px; font-weight: 700; color: #e6e5e1; margin-right: 2px; }
.pal-x { position: absolute; left: 111px; top: 6px; width: 16px; height: 16px; border-radius: 50%; background: #e4531e; color: #3a1c10; }
.pal-sel { display: flex; align-items: center; gap: 3px; height: 36px; padding: 1px 0 3px 1px; border-bottom: 1px solid #dcdbd7; color: #4f4e4a; }
.pal-cur { width: 31px; height: 31px; display: flex; align-items: center; justify-content: center; border: 1px solid #bcbab4; border-radius: 4px; background: linear-gradient(#f4f3f2, #e6e5e2); }
.cur-i { width: 11px; height: 16px; }
.pal-groups { display: flex; flex-direction: column; gap: 2px; padding: 6px 1px 4px; border-bottom: 1px solid #dcdbd7; }
.pal-g { display: flex; align-items: center; justify-content: center; height: 27px; border: 1px solid #aeaca6; border-radius: 5px; color: #55544f; background: linear-gradient(#f3f2f0, #dfdedb); white-space: nowrap; }
.pal-icons { display: flex; justify-content: space-between; padding: 12px 7px 0 6px; }
.pi { width: 20px; height: 16px; }
```
